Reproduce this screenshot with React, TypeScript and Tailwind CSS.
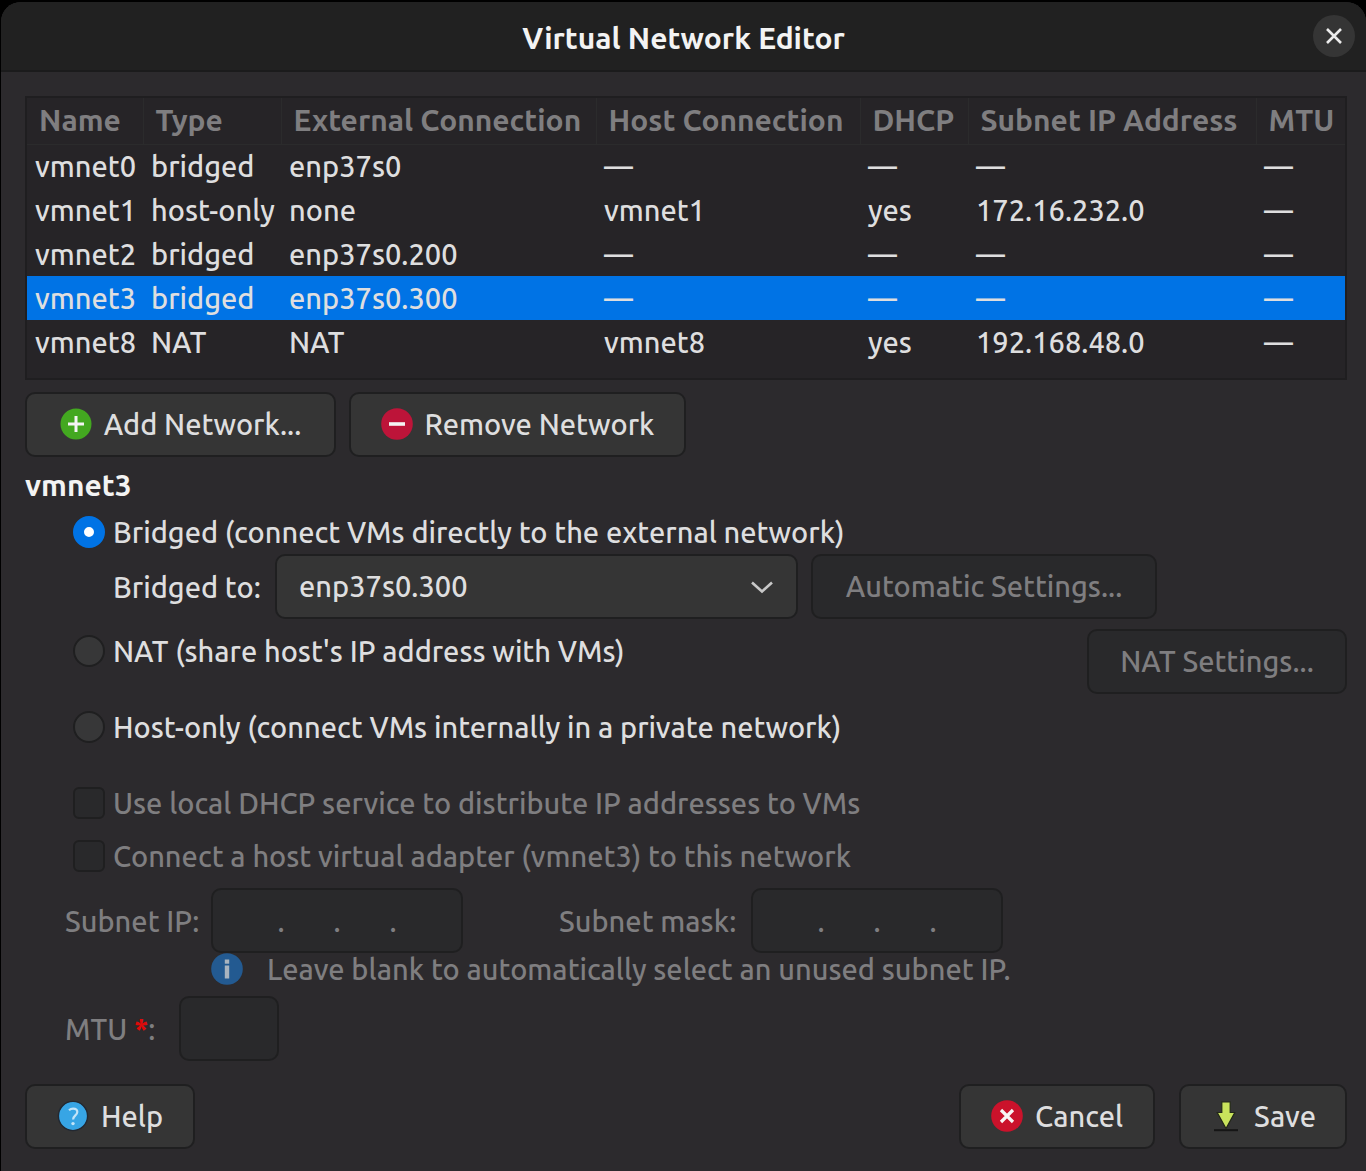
import { useState, type ReactNode } from "react";

type Network = {
  name: string;
  type: string;
  external: string;
  host: string;
  dhcp: string;
  subnet: string;
  mtu: string;
};

const networks: Network[] = [
  { name: "vmnet0", type: "bridged", external: "enp37s0", host: "—", dhcp: "—", subnet: "—", mtu: "—" },
  { name: "vmnet1", type: "host-only", external: "none", host: "vmnet1", dhcp: "yes", subnet: "172.16.232.0", mtu: "—" },
  { name: "vmnet2", type: "bridged", external: "enp37s0.200", host: "—", dhcp: "—", subnet: "—", mtu: "—" },
  { name: "vmnet3", type: "bridged", external: "enp37s0.300", host: "—", dhcp: "—", subnet: "—", mtu: "—" },
  { name: "vmnet8", type: "NAT", external: "NAT", host: "vmnet8", dhcp: "yes", subnet: "192.168.48.0", mtu: "—" },
];

const columns = [
  { label: "Name", width: "w-[116px]" },
  { label: "Type", width: "w-[138px]" },
  { label: "External Connection", width: "w-auto" },
  { label: "Host Connection", width: "w-[264px]" },
  { label: "DHCP", width: "w-[108px]" },
  { label: "Subnet IP Address", width: "w-[288px]" },
  { label: "MTU", width: "w-[89px]" },
];

function AddIcon() {
  return (
    <svg viewBox="0 0 32 32" className="size-8 shrink-0" aria-hidden="true">
      <circle cx="16" cy="16" r="15.5" fill="#43a820" />
      <path d="M16 8v16M8 16h16" stroke="#f4f4f4" strokeWidth="3" />
    </svg>
  );
}

function RemoveIcon() {
  return (
    <svg viewBox="0 0 32 32" className="size-8 shrink-0" aria-hidden="true">
      <circle cx="16" cy="16" r="15.8" fill="#bd1439" />
      <path d="M8 16h16" stroke="#f4f4f4" strokeWidth="3.6" />
    </svg>
  );
}

function HelpIcon() {
  return (
    <svg viewBox="0 0 32 32" className="size-8 shrink-0" aria-hidden="true">
      <circle cx="16" cy="16" r="14.6" fill="#37a5e5" stroke="#222831" strokeWidth="1.4" />
      <path d="M12 10.2c1.2-1.1 2.6-1.6 4.1-1.6 2.5 0 4.2 1.3 4.2 3.4 0 3.200-4.200 3.600-4.200 7.400" fill="none" stroke="#c3e4f8" strokeWidth="2.2" />
      <circle cx="16" cy="23.6" r="1.7" fill="#c3e4f8" />
    </svg>
  );
}

function CancelIcon() {
  return (
    <svg viewBox="0 0 32 32" className="size-8 shrink-0" aria-hidden="true">
      <circle cx="16" cy="16" r="15.8" fill="#cb122b" />
      <path d="M10 10l12 12M22 10L10 22" stroke="#f8f4f4" strokeWidth="3.2" />
    </svg>
  );
}

function SaveIcon() {
  return (
    <svg viewBox="0 0 32 32" className="size-8 shrink-0" aria-hidden="true">
      <path d="M4 30.200h24" stroke="#151515" strokeWidth="2" />
      <path d="M11.800 2h8.400v10.500h4.600L16 28.500 7.200 12.500h4.600z" fill="#c9e35c" stroke="#222719" strokeWidth="1.200" />
    </svg>
  );
}

function InfoIcon() {
  return (
    <svg viewBox="0 0 32 32" className="size-8 shrink-0" aria-hidden="true">
      <circle cx="16" cy="16" r="15.8" fill="#235a91" />
      <rect x="13.800" y="6.500" width="4.400" height="4.200" fill="#a9b4bf" />
      <rect x="13.800" y="12.500" width="4.400" height="13" fill="#a9b4bf" />
    </svg>
  );
}

function Button({ width, icon, disabled, children }: { width: string; icon?: ReactNode; disabled?: boolean; children: ReactNode }) {
  return (
    <button
      type="button"
      disabled={disabled}
      className={`${width} flex h-[65px] shrink-0 items-center justify-center gap-3 rounded-[10px] border-2 border-[#1f1f20] bg-[#353535] pb-[2px] whitespace-nowrap disabled:bg-[#29292b] disabled:text-[#7f7e80]`}
    >
      {icon}
      {children}
    </button>
  );
}

function ModeRadio({ value, mode, onSelect, children }: { value: string; mode: string; onSelect: (v: string) => void; children: ReactNode }) {
  return (
    <label className="flex h-11 items-center gap-2 whitespace-nowrap">
      <input
        type="radio"
        name="mode"
        value={value}
        checked={mode === value}
        onChange={() => onSelect(value)}
        className="size-8 shrink-0 appearance-none rounded-full border-2 border-[#1f1f20] bg-[#373738] checked:border-11 checked:border-[#0073e5] checked:bg-white"
      />
      {children}
    </label>
  );
}

function DisabledCheck({ children }: { children: ReactNode }) {
  return (
    <label className="flex h-11 items-center gap-2 whitespace-nowrap text-[#7f7e80]">
      <input type="checkbox" disabled className="size-8 shrink-0 appearance-none rounded-md border-2 border-[#1f1f20] bg-[#29292b]" />
      <span>{children}</span>
    </label>
  );
}

function IpField({ id, name }: { id: string; name: string }) {
  return (
    <div role="group" aria-labelledby={id} className="flex h-[65px] w-[252px] items-center rounded-[10px] border-2 border-[#1f1f20] bg-[#29292b] pl-4">
      {[1, 2, 3, 4].map((n) => (
        <div key={n} className="flex items-center">
          <input disabled aria-label={`${name} octet ${n}`} className="w-12 bg-transparent" />
          {n < 4 && <span className="w-2 text-center">.</span>}
        </div>
      ))}
    </div>
  );
}

export default function App() {
  const [mode, setMode] = useState("bridged");
  const [selected, setSelected] = useState("vmnet3");

  return (
    <div className="flex min-h-screen flex-col bg-black pt-[2px] pl-px font-['Ubuntu','Noto_Sans',sans-serif] text-[29px] leading-8 font-medium text-[#dededf]">
      <main className="grow overflow-hidden rounded-t-[20px] bg-[#2c2a2d]">
        <header className="grid h-[70px] grid-cols-[1fr_auto_1fr] items-center border-b-2 border-[#1b1b1c] bg-[#212121] px-[11px]">
          <h1 className="col-start-2 pt-1 text-[30px] font-bold text-[#f3f3f3]">Virtual Network Editor</h1>
          <button type="button" aria-label="Close" className="flex size-[42px] items-center justify-center justify-self-end rounded-full bg-[#353535]">
            <svg viewBox="0 0 20 20" className="size-5" aria-hidden="true">
              <path d="M3 3l14 14M17 3L3 17" stroke="#ececec" strokeWidth="2.600" />
            </svg>
          </button>
        </header>

        <div className="px-6 pt-6 pr-[19px] pb-[22px]">
          <div className="h-[284px] border-2 border-[#1f1e20] bg-[#262427]">
            <table className="w-full table-fixed border-collapse text-left whitespace-nowrap">
              <thead>
                <tr className="h-[46px] text-[30px] text-[#7f7e80]">
                  {columns.map((c) => (
                    <th key={c.label} className={`${c.width} border-r border-b border-[#2b2b2c] p-0 pb-[2px] pl-3 font-bold last:border-r-0`}>
                      {c.label}
                    </th>
                  ))}
                </tr>
              </thead>
              <tbody>
                {networks.map((n) => (
                  <tr
                    key={n.name}
                    onClick={() => setSelected(n.name)}
                    aria-selected={n.name === selected}
                    className="h-11 aria-selected:bg-[#0073e5]"
                  >
                    {[n.name, n.type, n.external, n.host, n.dhcp, n.subnet, n.mtu].map((v, i) => (
                      <td key={i} className="p-0 pl-2">
                        {v}
                      </td>
                    ))}
                  </tr>
                ))}
              </tbody>
            </table>
          </div>

          <div className="mt-3 flex gap-[13px]">
            <Button width="w-[311px]" icon={<AddIcon />}>Add Network...</Button>
            <Button width="w-[337px]" icon={<RemoveIcon />}>Remove Network</Button>
          </div>

          <h2 className="mt-3 text-[30px] font-bold text-[#f3f3f3]">{selected}</h2>

          <div className="mt-[9px] pl-12">
            <ModeRadio value="bridged" mode={mode} onSelect={setMode}>
              Bridged (connect VMs directly to the external network)
            </ModeRadio>
            <div className="flex items-center pl-10">
              <label htmlFor="bridged-to" className="w-[162px] whitespace-nowrap">Bridged to:</label>
              <div className="relative w-[523px]">
                <select id="bridged-to" defaultValue="enp37s0.300" className="block h-[65px] w-full appearance-none rounded-[10px] border-2 border-[#1f1f20] bg-[#353535] px-[22px] pb-[2px]">
                  <option>enp37s0.300</option>
                  <option>enp37s0.200</option>
                  <option>enp37s0</option>
                </select>
                <svg viewBox="0 0 24 14" className="pointer-events-none absolute top-[26px] right-6 h-[14px] w-6" aria-hidden="true">
                  <path d="M2 2.500l10 9 10-9" fill="none" stroke="#c8c8c8" strokeWidth="2.600" />
                </svg>
              </div>
              <div className="ml-[13px]">
                <Button width="w-[346px]" disabled>Automatic Settings...</Button>
              </div>
            </div>
            <div className="mt-[10px] flex items-start justify-between">
              <ModeRadio value="nat" mode={mode} onSelect={setMode}>
                NAT (share host's IP address with VMs)
              </ModeRadio>
              <Button width="w-[260px]" disabled>NAT Settings...</Button>
            </div>
            <div className="mt-[11px]">
              <ModeRadio value="host-only" mode={mode} onSelect={setMode}>
                Host-only (connect VMs internally in a private network)
              </ModeRadio>
            </div>
            <div className="mt-8 flex flex-col gap-[9px]">
              <DisabledCheck>Use local DHCP service to distribute IP addresses to VMs</DisabledCheck>
              <DisabledCheck>Connect a host virtual adapter ({selected}) to this network</DisabledCheck>
            </div>
          </div>

          <div className="mt-[10px] pl-10 text-[#7f7e80]">
            <div className="flex items-center whitespace-nowrap">
              <span id="subnet-ip" className="w-[146px]">Subnet IP:</span>
              <IpField id="subnet-ip" name="Subnet IP" />
              <span id="subnet-mask" className="ml-24 w-[192px]">Subnet mask:</span>
              <IpField id="subnet-mask" name="Subnet mask" />
            </div>
            <div className="flex items-center gap-6 pl-[146px]">
              <InfoIcon />
              <p>Leave blank to automatically select an unused subnet IP.</p>
            </div>
            <div className="mt-[11px] flex items-center">
              <label htmlFor="mtu" className="w-[114px] whitespace-nowrap">
                MTU <span className="font-bold text-[#dd0b0b]">*</span>:
              </label>
              <input id="mtu" disabled className="h-[65px] w-[100px] rounded-[10px] border-2 border-[#1f1f20] bg-[#29292b] px-3" />
            </div>
          </div>

          <footer className="mt-[23px] flex gap-6">
            <Button width="w-[170px]" icon={<HelpIcon />}>Help</Button>
            <div className="ml-auto">
              <Button width="w-[196px]" icon={<CancelIcon />}>Cancel</Button>
            </div>
            <Button width="w-[168px]" icon={<SaveIcon />}>Save</Button>
          </footer>
        </div>
      </main>
    </div>
  );
}
